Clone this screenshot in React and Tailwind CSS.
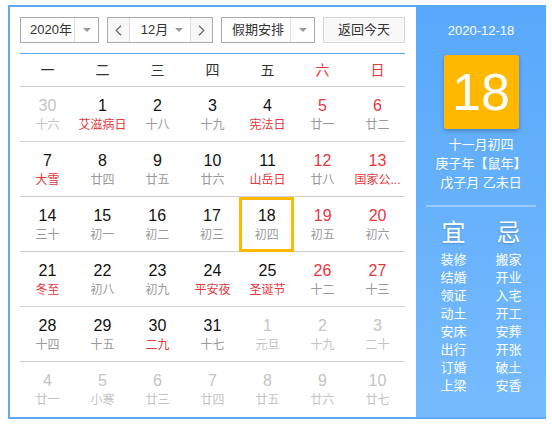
import React from "react";

// each row: [day, lunar, flags] — o = other month, f = festival (red lunar text)
const ROWS = [
  [[30, "十六", "o"], [1, "艾滋病日", "f"], [2, "十八"], [3, "十九"], [4, "宪法日", "f"], [5, "廿一"], [6, "廿二"]],
  [[7, "大雪", "f"], [8, "廿四"], [9, "廿五"], [10, "廿六"], [11, "山岳日", "f"], [12, "廿八"], [13, "国家公...", "f"]],
  [[14, "三十"], [15, "初一"], [16, "初二"], [17, "初三"], [18, "初四"], [19, "初五"], [20, "初六"]],
  [[21, "冬至", "f"], [22, "初八"], [23, "初九"], [24, "平安夜", "f"], [25, "圣诞节", "f"], [26, "十二"], [27, "十三"]],
  [[28, "十四"], [29, "十五"], [30, "二九", "f"], [31, "十七"], [1, "元旦", "o"], [2, "十九", "o"], [3, "二十", "o"]],
  [[4, "廿一", "o"], [5, "小寒", "o"], [6, "廿三", "o"], [7, "廿四", "o"], [8, "廿五", "o"], [9, "廿六", "o"], [10, "廿七", "o"]],
];

const WEEK = ["一", "二", "三", "四", "五", "六", "日"];
const YI = ["装修", "结婚", "领证", "动土", "安床", "出行", "订婚", "上梁"];
const JI = ["搬家", "开业", "入宅", "开工", "安葬", "开张", "破土", "安香"];

function Caret() {
  return <span className="w-0 h-0 border-x-[4px] border-x-transparent border-t-[4px] border-t-[#999]" />;
}

function Chevron({ dir }) {
  return (
    <svg width="7" height="11" viewBox="0 0 7 11" fill="none">
      <path
        d={dir === "left" ? "M6 0.8 L1.2 5.5 L6 10.2" : "M1 0.8 L5.8 5.5 L1 10.2"}
        stroke="#666"
        strokeWidth="1.2"
      />
    </svg>
  );
}

function Toolbar() {
  return (
    <div className="flex gap-[8px] h-[26px] text-[13px] text-[#333] whitespace-nowrap">
      <div className="w-[79px] flex border border-[#aaa] bg-white">
        <div className="flex-1 flex items-center pl-[9px]">2020年</div>
        <div className="w-[24px] flex items-center justify-center border-l border-[#ddd]">
          <Caret />
        </div>
      </div>

      <div className="w-[106px] flex border border-[#aaa] bg-white">
        <button className="w-[22px] flex items-center justify-center bg-[#f7f7f7] border-r border-[#ddd]">
          <Chevron dir="left" />
        </button>
        <div className="flex-1 flex items-center pl-[11px]">
          <span className="flex-1">12月</span>
          <span className="w-[22px] flex justify-center">
            <Caret />
          </span>
        </div>
        <button className="w-[22px] flex items-center justify-center bg-[#f7f7f7] border-l border-[#ddd]">
          <Chevron dir="right" />
        </button>
      </div>

      <div className="w-[94px] flex border border-[#aaa] bg-white">
        <div className="flex-1 flex items-center pl-[10px]">假期安排</div>
        <div className="w-[24px] flex items-center justify-center border-l border-[#ddd]">
          <Caret />
        </div>
      </div>

      <button className="w-[82px] border border-[#d6d6d6] bg-[#f8f8f8] flex items-center justify-center">
        返回今天
      </button>
    </div>
  );
}

function DayCell({ day, col }) {
  const [d, lunar, flag] = day;
  const other = flag === "o";
  const fest = flag === "f";
  const today = d === 18 && !other;

  let numColor = "text-[#111]";
  if (other) numColor = "text-[#c4c4c4]";
  else if (col >= 5) numColor = "text-[#e5383c]";

  let lunarColor = "text-[#999]";
  if (other) lunarColor = "text-[#c4c4c4]";
  else if (fest) lunarColor = "text-[#e5383c]";

  return (
    <div
      className={
        "w-[55px] h-[54px] flex flex-col items-center justify-center pt-[1px] " +
        (today ? "border-[3px] border-[#ffb800] w-[54px] h-[55px] relative z-10 mr-[1px]" : "")
      }
    >
      <div className={"text-[16px] leading-[20px] " + numColor}>{d}</div>
      <div className={"text-[12px] leading-[18px] whitespace-nowrap " + lunarColor}>{lunar}</div>
    </div>
  );
}

function Calendar() {
  return (
    <div className="w-[408px] h-[412px] border-l-2 border-t-2 border-[#5ea8f6] bg-white px-[10px] pt-[10px]">
      <Toolbar />
      <div className="mt-[10px] w-[385px] border-t border-[#5ea8f6]">
        <div className="h-[33px] grid grid-cols-7 border-b border-[#ccc] text-[14px]">
          {WEEK.map((w, i) => (
            <div
              key={w}
              className={"flex items-center justify-center " + (i >= 5 ? "text-[#e5383c]" : "text-[#333]")}
            >
              {w}
            </div>
          ))}
        </div>
        {ROWS.map((row, r) => (
          <div
            key={r}
            className={"flex h-[55px] " + (r < ROWS.length - 1 ? "border-b border-[#cfcfcf]" : "h-[54px]")}
          >
            {row.map((day, c) => (
              <DayCell key={c} day={day} col={c} />
            ))}
          </div>
        ))}
      </div>
    </div>
  );
}

function SidePanel() {
  return (
    <div className="w-[130px] h-[412px] bg-linear-to-b from-[#58a8fb] to-[#76bbfd] text-white flex flex-col items-center pt-[16px]">
      <div className="text-[13px] leading-[20px]">2020-12-18</div>
      <div className="mt-[14px] w-[75px] h-[74px] rounded-[3px] bg-[#ffb800] shadow-[0_2px_4px_rgba(0,0,0,0.25)] flex items-center justify-center text-[52px] leading-none">
        18
      </div>
      <div className="mt-[6px] text-[13px] leading-[19px] text-center">
        <div>十一月初四</div>
        <div>庚子年【鼠年】</div>
        <div>戊子月 乙未日</div>
      </div>
      <div className="mt-[13px] w-[110px] h-[2px] bg-white/35" />
      <div className="mt-[11px] w-[110px] grid grid-cols-2">
        <div className="flex flex-col items-center">
          <div className="text-[24px] leading-[30px] [text-shadow:0_1px_2px_rgba(0,0,0,0.2)]">宜</div>
          <div className="mt-[3px] text-[13px] leading-[18px] flex flex-col items-center">
            {YI.map((t) => (
              <div key={t}>{t}</div>
            ))}
          </div>
        </div>
        <div className="flex flex-col items-center">
          <div className="text-[24px] leading-[30px] [text-shadow:0_1px_2px_rgba(0,0,0,0.2)]">忌</div>
          <div className="mt-[3px] text-[13px] leading-[18px] flex flex-col items-center">
            {JI.map((t) => (
              <div key={t}>{t}</div>
            ))}
          </div>
        </div>
      </div>
    </div>
  );
}

export default function App() {
  return (
    <div className="pl-[8px] pt-[5px] font-['Liberation_Sans','Noto_Sans_CJK_SC',sans-serif]">
      <div className="w-[538px] flex border-b-2 border-[#5ea8f6]">
        <Calendar />
        <SidePanel />
      </div>
    </div>
  );
}
